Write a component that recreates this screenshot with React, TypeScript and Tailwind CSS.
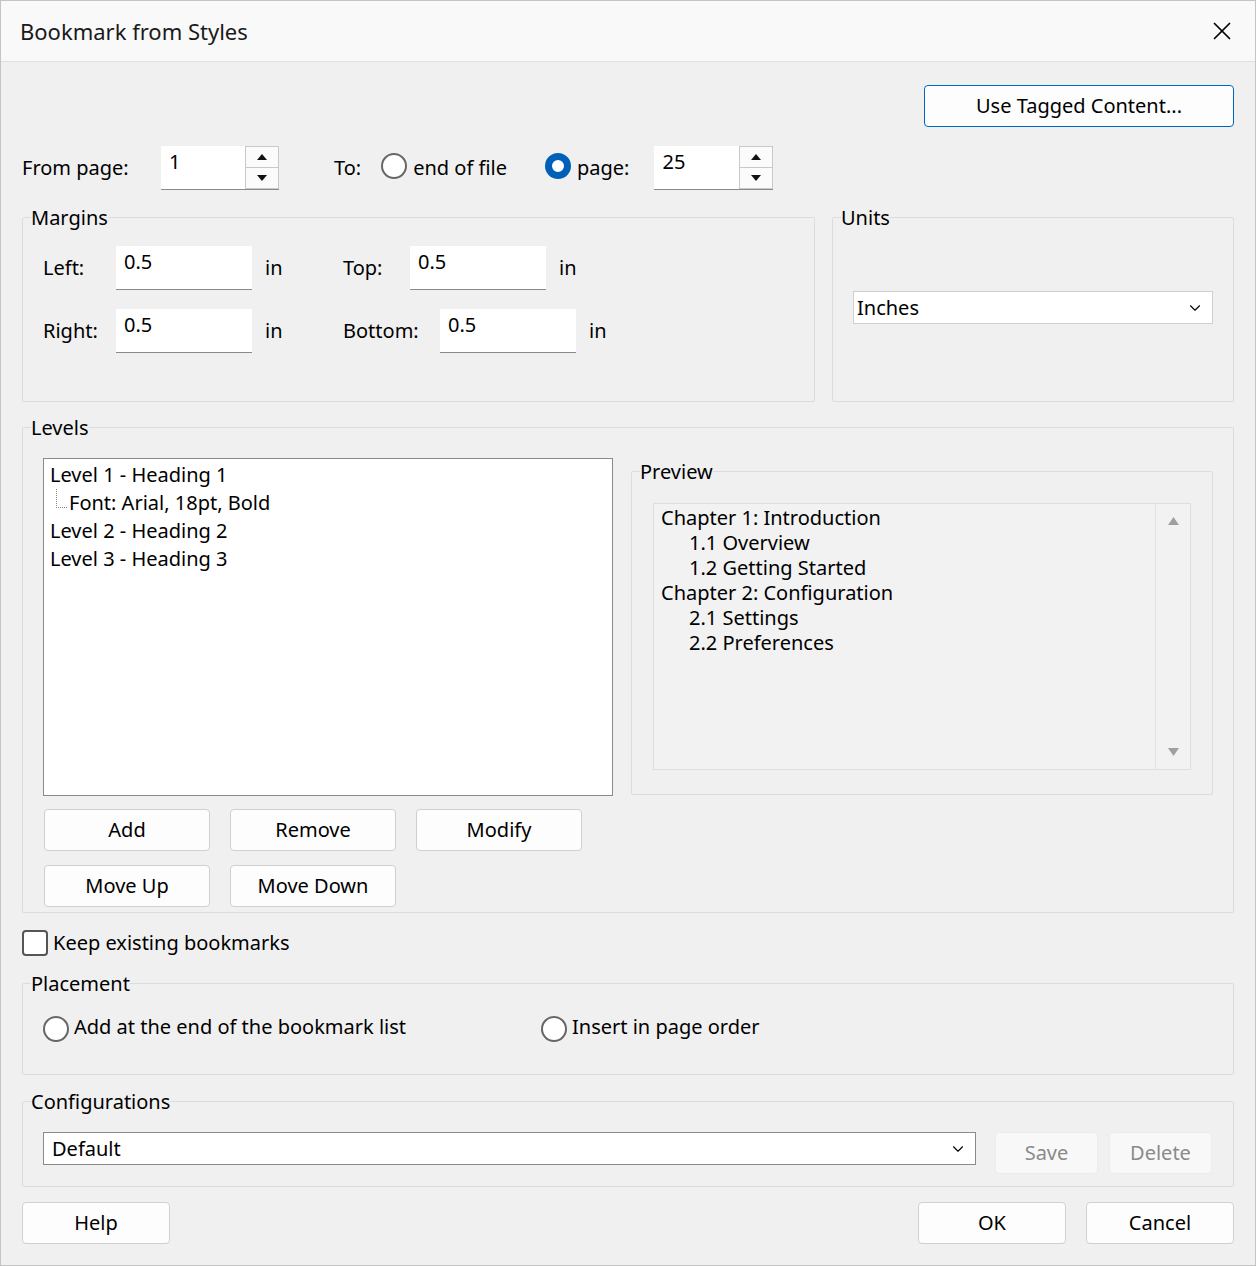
import { ChevronDown, X } from 'lucide-react';

const font = { fontFamily: '"Noto Sans", "Open Sans", sans-serif' };

function Spin({ value, w }: { value: string; w: string }) {
  return (
    <div className={`flex h-[44px] ${w} border-b border-[#8a8a8a] bg-white`}>
      <div className="flex-1 pl-[8px] pt-[2px] leading-[27px]">{value}</div>
      <div className="flex w-[34px] flex-col border border-[#c9c9c9] bg-[#f3f3f3]">
        <div className="flex flex-1 items-center justify-center border-b border-[#c9c9c9] bg-[#fbfbfb]">
          <svg width="10" height="6" viewBox="0 0 10 6"><path d="M0 6 L5 0 L10 6Z" fill="#111" /></svg>
        </div>
        <div className="flex flex-1 items-center justify-center bg-[#fbfbfb]">
          <svg width="10" height="6" viewBox="0 0 10 6"><path d="M0 0 L5 6 L10 0Z" fill="#111" /></svg>
        </div>
      </div>
    </div>
  );
}

function Field({ value, w }: { value: string; w: string }) {
  return (
    <div className={`h-[44px] ${w} border-b border-[#8a8a8a] bg-white pl-[8px] pt-[2px] leading-[27px]`}>{value}</div>
  );
}

function Radio({ on }: { on?: boolean }) {
  return on ? (
    <span className="inline-block h-[26px] w-[26px] translate-y-[2px] rounded-full border-[7px] border-[#0060b8] bg-white" />
  ) : (
    <span className="inline-block h-[26px] w-[26px] translate-y-[2px] rounded-full border-2 border-[#666] bg-white" />
  );
}

function Btn({ label, w, disabled }: { label: string; w: string; disabled?: boolean }) {
  return (
    <button
      className={`h-[42px] ${w} rounded-[4px] border ${disabled ? 'border-[#ececec] bg-[#f8f8f8] text-[#8a8a8a]' : 'border-[#d0d0d0] bg-[#fdfdfd] text-black'}`}
    >
      {label}
    </button>
  );
}

function Group({ title, className, children }: { title: string; className: string; children?: React.ReactNode }) {
  return (
    <fieldset className={`rounded-[2px] border border-[#dcdcdc] px-[8px] ${className}`}>
      <legend className="leading-[27px]">{title}</legend>
      {children}
    </fieldset>
  );
}

export default function App() {
  return (
    <div style={font} className="w-[1256px] h-[1266px] border border-[#c4c4c4] bg-[#f0f0f0] text-[20px] text-black">
      {/* Title bar */}
      <div className="flex h-[61px] items-center justify-between border-b border-[#e0e0e0] bg-[#f9f9f9] pl-[19px] pr-[18px]">
        <span className="text-[22px] text-[#1a1a1a]">Bookmark from Styles</span>
        <X size={30} strokeWidth={1.4} />
      </div>

      <div className="px-[21px]">
        <div className="mt-[23px] flex justify-end">
          <button className="h-[42px] w-[310px] rounded-[4px] border border-[#0067c0] bg-[#fdfdfd]">Use Tagged Content...</button>
        </div>

        {/* page range */}
        <div className="mt-[19px] flex h-[44px] items-center">
          <span className="w-[139px]">From page:</span>
          <Spin value="1" w="w-[118px]" />
          <span className="ml-[55px]">To:</span>
          <span className="ml-[20px]"><Radio /></span>
          <span className="ml-[6px]">end of file</span>
          <span className="ml-[38px]"><Radio on /></span>
          <span className="ml-[6px]">page:</span>
          <span className="ml-[25px]"><Spin value="25" w="w-[119px]" /></span>
        </div>

        {/* Margins + Units */}
        <div className="mt-[14px] flex gap-[17px]">
          <Group title="Margins" className="h-[198px] w-[793px]">
            <div className="mt-[15px] flex h-[44px] items-center pl-[12px]">
              <span className="w-[73px]">Left:</span>
              <Field value="0.5" w="w-[136px]" />
              <span className="ml-[13px] w-[78px]">in</span>
              <span className="w-[67px]">Top:</span>
              <Field value="0.5" w="w-[136px]" />
              <span className="ml-[13px]">in</span>
            </div>
            <div className="mt-[19px] flex h-[44px] items-center pl-[12px]">
              <span className="w-[73px]">Right:</span>
              <Field value="0.5" w="w-[136px]" />
              <span className="ml-[13px] w-[78px]">in</span>
              <span className="w-[97px]">Bottom:</span>
              <Field value="0.5" w="w-[136px]" />
              <span className="ml-[13px]">in</span>
            </div>
          </Group>
          <Group title="Units" className="h-[198px] flex-1">
            <div className="ml-[12px] mr-[12px] mt-[60px] flex h-[33px] items-center justify-between border border-[#cfcfcf] bg-white pl-[3px] pr-[8px]">
              <span>Inches</span>
              <ChevronDown size={18} strokeWidth={1.5} />
            </div>
          </Group>
        </div>

        {/* Levels */}
        <Group title="Levels" className="mt-[12px] h-[499px] w-full">
          <div className="mt-[17px] flex pl-[12px]">
            <div className="h-[338px] w-[570px] border border-[#8a8a8a] bg-white px-[6px] pt-[2px] leading-[28px]">
              <div>Level 1 - Heading 1</div>
              <div className="flex">
                <span className="ml-[6px] mr-[2px] mb-[9px] w-[11px] border-b border-l border-dotted border-[#888]" />
                Font: Arial, 18pt, Bold
              </div>
              <div>Level 2 - Heading 2</div>
              <div>Level 3 - Heading 3</div>
            </div>
            <Group title="Preview" className="ml-[18px] h-[337px] w-[582px]">
              <div className="mx-[13px] mt-[18px] flex h-[267px] border border-[#dedede] bg-[#f2f2f2]">
                <div className="flex-1 pl-[7px] pt-[1px] leading-[25px]">
                  <div>Chapter 1: Introduction</div>
                  <div className="pl-[28px]">1.1 Overview</div>
                  <div className="pl-[28px]">1.2 Getting Started</div>
                  <div>Chapter 2: Configuration</div>
                  <div className="pl-[28px]">2.1 Settings</div>
                  <div className="pl-[28px]">2.2 Preferences</div>
                </div>
                <div className="flex w-[35px] flex-col items-center justify-between border-l border-[#e4e4e4] py-[13px]">
                  <svg width="11" height="8" viewBox="0 0 11 8"><path d="M0 8 L5.5 0 L11 8Z" fill="#a0a0a0" /></svg>
                  <svg width="11" height="8" viewBox="0 0 11 8"><path d="M0 0 L5.5 8 L11 0Z" fill="#a0a0a0" /></svg>
                </div>
              </div>
            </Group>
          </div>
          <div className="mt-[13px] flex gap-[20px] pl-[13px]">
            <Btn label="Add" w="w-[166px]" />
            <Btn label="Remove" w="w-[166px]" />
            <Btn label="Modify" w="w-[166px]" />
          </div>
          <div className="mt-[14px] flex gap-[20px] pl-[13px]">
            <Btn label="Move Up" w="w-[166px]" />
            <Btn label="Move Down" w="w-[166px]" />
          </div>
        </Group>

        <div className="mt-[15px] flex items-center gap-[5px]">
          <span className="inline-block h-[26px] w-[26px] rounded-[4px] border-2 border-[#555] bg-white" />
          <span>Keep existing bookmarks</span>
        </div>

        <Group title="Placement" className="mt-[12px] h-[105px] w-full">
          <div className="mt-[15px] flex items-center pl-[12px]">
            <Radio />
            <span className="ml-[5px] w-[467px]">Add at the end of the bookmark list</span>
            <Radio />
            <span className="ml-[5px]">Insert in page order</span>
          </div>
        </Group>

        <Group title="Configurations" className="mt-[13px] h-[99px] w-full">
          <div className="mt-[17px] flex items-start pl-[12px]">
            <div className="flex h-[33px] w-[933px] items-center justify-between border border-[#8a8a8a] bg-white pl-[8px] pr-[8px]">
              <span>Default</span>
              <ChevronDown size={18} strokeWidth={1.5} />
            </div>
            <div className="ml-[19px] flex gap-[11px]">
              <Btn label="Save" w="w-[103px]" disabled />
              <Btn label="Delete" w="w-[103px]" disabled />
            </div>
          </div>
        </Group>

        <div className="mt-[15px] flex">
          <Btn label="Help" w="w-[148px]" />
          <div className="ml-auto flex gap-[20px]">
            <Btn label="OK" w="w-[148px]" />
            <Btn label="Cancel" w="w-[148px]" />
          </div>
        </div>
      </div>
    </div>
  );
}
